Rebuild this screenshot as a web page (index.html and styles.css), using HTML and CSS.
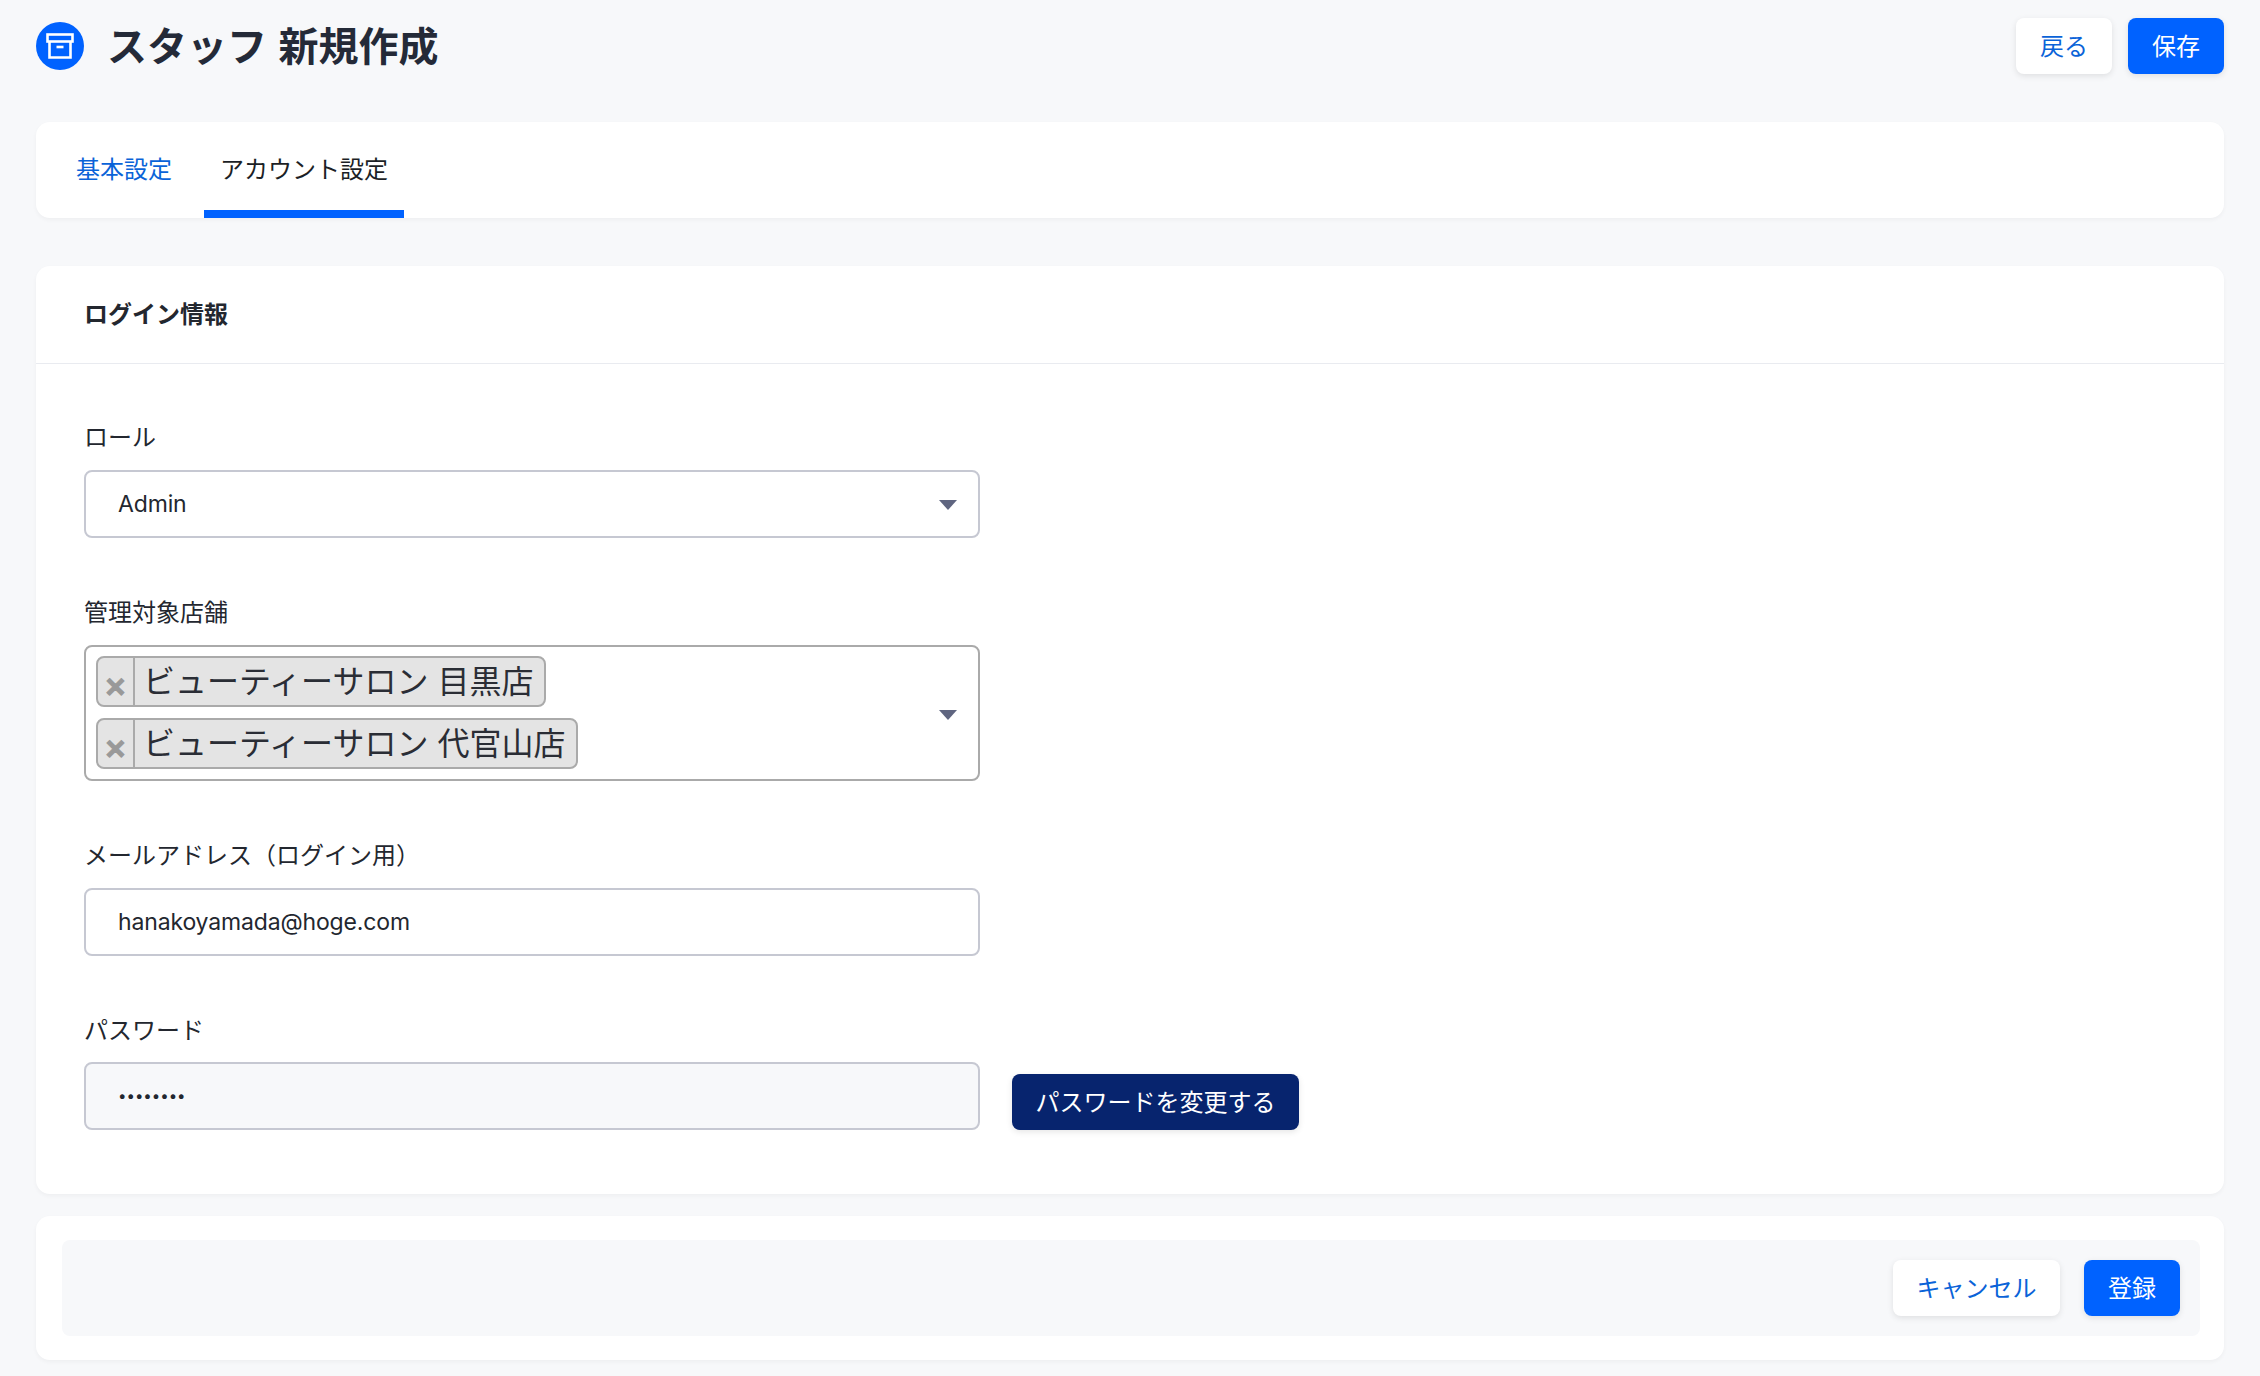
FILE: index.html
```html
<!DOCTYPE html>
<html lang="ja">
<head>
<meta charset="utf-8">
<title>スタッフ 新規作成</title>
<link rel="stylesheet" href="styles.css">
</head>
<body>
<div class="page">
  <header class="page-header">
    <div class="title-group">
      <span class="title-icon">
        <svg width="30" height="30" viewBox="0 0 30 30" fill="none" stroke="#fff" stroke-width="2.6">
          <rect x="2.5" y="3.5" width="25" height="7"/>
          <path d="M4.5 10.5V26.5H25.5V10.5"/>
          <path d="M11.5 16h7"/>
        </svg>
      </span>
      <h1 class="title">スタッフ 新規作成</h1>
    </div>
    <div class="actions">
      <button class="btn btn-white">戻る</button>
      <button class="btn btn-blue">保存</button>
    </div>
  </header>

  <nav class="card tabs">
    <a class="tab">基本設定</a>
    <a class="tab tab-active">アカウント設定</a>
  </nav>

  <section class="card form-card">
    <h2 class="card-title">ログイン情報</h2>
    <div class="card-body">
      <div class="field">
        <label class="label">ロール</label>
        <div class="control select"><span>Admin</span><i class="arrow"></i></div>
      </div>
      <div class="field">
        <label class="label">管理対象店舗</label>
        <div class="multi">
          <div class="chips">
            <span class="chip"><span class="chip-x">×</span><span class="chip-text">ビューティーサロン 目黒店</span></span>
            <span class="chip"><span class="chip-x">×</span><span class="chip-text">ビューティーサロン 代官山店</span></span>
          </div>
          <i class="arrow"></i>
        </div>
      </div>
      <div class="field">
        <label class="label">メールアドレス（ログイン用）</label>
        <input class="control" type="text" value="hanakoyamada@hoge.com">
      </div>
      <div class="field field-tight">
        <label class="label">パスワード</label>
        <div class="password-row">
          <input class="control control-disabled" type="password" value="password">
          <button class="btn btn-navy">パスワードを変更する</button>
        </div>
      </div>
    </div>
  </section>

  <footer class="card footer-card">
    <div class="footer-bar">
      <button class="btn btn-white btn-cancel">キャンセル</button>
      <button class="btn btn-blue">登録</button>
    </div>
  </footer>
</div>
</body>
</html>
```
FILE: styles.css
```css
* { box-sizing: border-box; }
html, body { margin: 0; padding: 0; }
body {
  background: #f7f8fa;
  color: #23272f;
  font-family: Inter, "Noto Sans CJK JP", sans-serif;
  font-size: 24px;
}
.page { padding: 18px 36px 16px; }

.page-header { display: flex; justify-content: space-between; align-items: center; height: 56px; }
.title-group { display: flex; align-items: center; gap: 23px; }
.title-icon {
  width: 48px; height: 48px; border-radius: 50%;
  background: #0062ff;
  display: flex; align-items: center; justify-content: center;
}
.title { margin: 0; font-size: 40px; font-weight: 700; line-height: 56px; color: #242a38; word-spacing: 2px; position: relative; top: 1px; }
.actions { display: flex; gap: 16px; }

.btn {
  height: 56px; min-width: 96px; padding: 0 24px 4px;
  border: 0; border-radius: 8px;
  font: inherit; font-size: 24px;
  box-shadow: 0 2px 6px rgba(0, 0, 0, .1);
}
.btn-white { background: #fff; color: #0a63d8; }
.btn-blue { background: #0062ff; color: #fff; }
.btn-navy { background: #07246e; color: #fff; width: 287px; padding: 0 0 4px; flex: none; }
.btn-cancel { width: 167px; padding: 0 0 4px; }

.card { background: #fff; border-radius: 14px; box-shadow: 0 2px 4px rgba(0, 0, 0, .04); }

.tabs { display: flex; gap: 16px; height: 96px; margin-top: 48px; padding: 0 24px; }
.tab {
  display: flex; align-items: center; padding: 0 16px 5px;
  font-size: 24px; color: #0a63d8;
}
.tab-active { width: 200px; justify-content: center; border-bottom: 8px solid #0062ff; border-top: 8px solid transparent; color: #1c1f26; }

.form-card { margin-top: 48px; height: 928px; }
.card-title {
  margin: 0; height: 98px; padding: 0 48px 5px;
  display: flex; align-items: center;
  font-size: 24px; font-weight: 700;
  border-bottom: 1px solid #e9ebf0;
}
.card-body { padding: 56px 48px 0; display: flex; flex-direction: column; gap: 57px; }
.field { display: flex; flex-direction: column; gap: 14px; }
.field-tight { gap: 13px; }
.label { font-size: 24px; line-height: 36px; color: #23272f; }

.control {
  width: 896px; height: 68px; padding: 0 32px;
  border: 2px solid #c6c8d2; border-radius: 8px;
  background: #fff; color: #23272f;
  font: inherit; font-size: 23px; letter-spacing: -.15px; outline: none;
}
.select { display: flex; justify-content: space-between; align-items: center; padding-right: 21px; }
.select .arrow { margin-top: 2px; }
.arrow { width: 0; height: 0; border-style: solid; border-width: 10px 9px 0; border-color: #5f6580 transparent transparent; flex: none; }
.multi {
  width: 896px; height: 136px; padding: 9px 21px 0 10px;
  border: 2px solid #aaa; border-radius: 8px; background: #fff;
  display: flex; justify-content: space-between; align-items: flex-start;
}
.multi .arrow { margin-top: 54px; }
.chips { display: flex; flex-direction: column; align-items: flex-start; gap: 11px; }
.chip {
  display: flex; height: 51px;
  border: 2px solid #aaa; border-radius: 8px; background: #e4e4e4;
  color: #2a2d35;
}
.chip-x {
  width: 37px; border-right: 2px solid #aaa; color: #999;
  font-family: "Liberation Sans", sans-serif; font-weight: 700; font-size: 34px; line-height: 56px;
  -webkit-text-stroke: 1px #999;
  text-align: center;
}
.chip-text { padding: 0 11px 0 8px; font-size: 32px; line-height: 48px; white-space: nowrap; }

.password-row { display: flex; align-items: flex-end; gap: 32px; }
.control-disabled { background: #f7f8fa; letter-spacing: 0; font-size: 15px; padding-bottom: 2px; }

.footer-card { margin-top: 22px; height: 144px; padding: 24px 24px 24px 26px; }
.footer-bar {
  height: 96px; padding: 0 20px;
  background: #f7f8fa; border-radius: 8px;
  display: flex; justify-content: flex-end; align-items: center; gap: 24px;
}
```
